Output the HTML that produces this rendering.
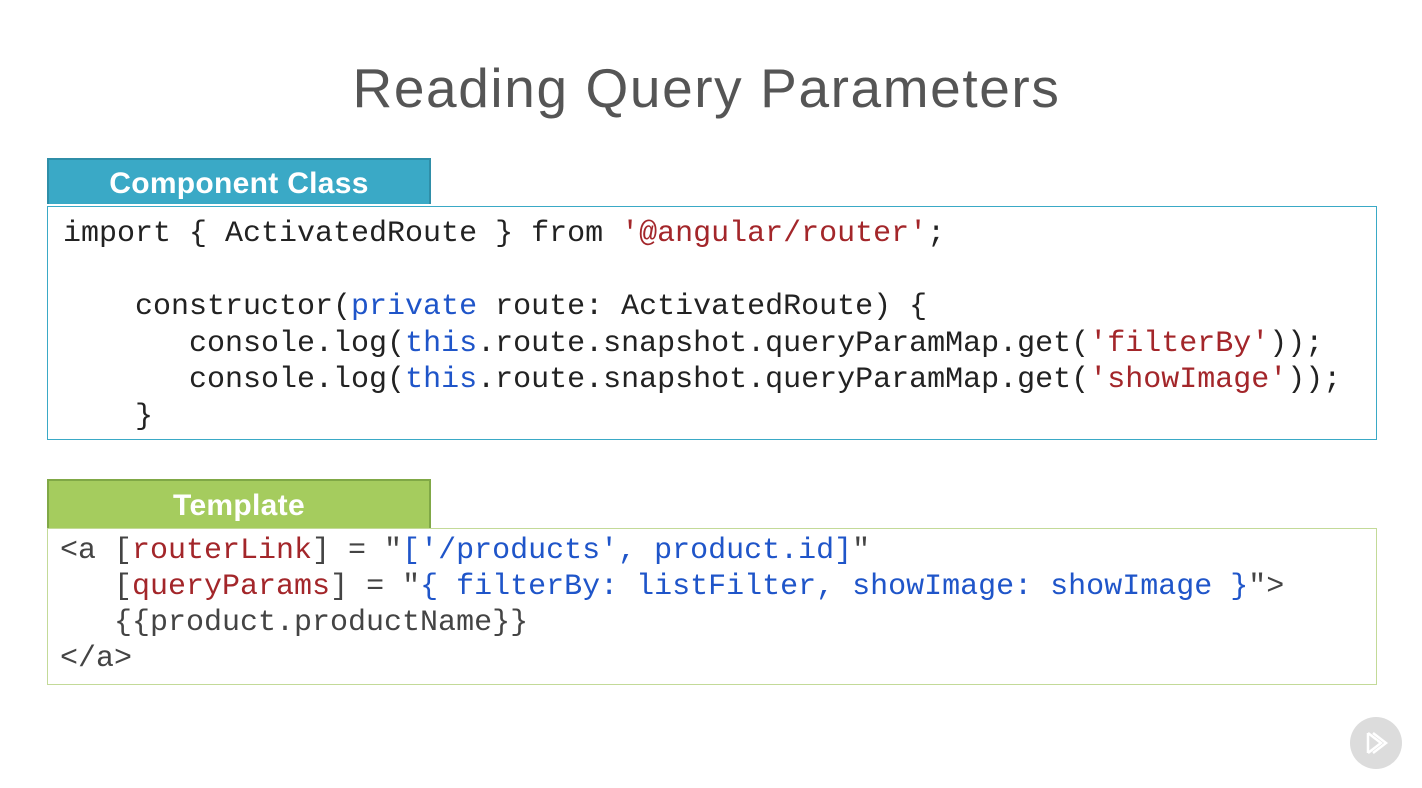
<!DOCTYPE html>
<html><head><style>
html,body{margin:0;padding:0;background:#fff;width:1422px;height:788px;overflow:hidden;position:relative;font-family:"Liberation Sans",sans-serif}
.title{position:absolute;top:56px;left:0;width:1413px;text-align:center;font-size:55px;color:#555;letter-spacing:1.6px}
.hdr{position:absolute;left:47px;width:384px;height:46px;color:#fff;font-weight:bold;font-size:30px;text-align:center;line-height:48px;box-sizing:border-box;letter-spacing:0.3px}
.box{position:absolute;left:47px;width:1330px;box-sizing:border-box;background:#fff}
pre{margin:0;font-family:"Liberation Mono",monospace;font-size:30px;position:absolute;white-space:pre}
.r{color:#a3262a}.b{color:#1f55c9}
</style></head><body>
<div class="title">Reading Query Parameters</div>
<div class="hdr" style="top:158px;background:#3aa9c6;border:2px solid #2f8ea8;border-bottom:none">Component Class</div>
<div class="box" style="top:206px;height:234px;border:1px solid #3aa9c6"></div>
<pre style="left:63px;top:216px;line-height:36.5px;color:#222">import { ActivatedRoute } from <span class="r">'@angular/router'</span>;

    constructor(<span class="b">private</span> route: ActivatedRoute) {
       console.log(<span class="b">this</span>.route.snapshot.queryParamMap.get(<span class="r">'filterBy'</span>));
       console.log(<span class="b">this</span>.route.snapshot.queryParamMap.get(<span class="r">'showImage'</span>));
    }</pre>
<div class="hdr" style="top:479px;height:49px;background:#a5cc5e;border:2px solid #80a846;border-bottom:none;line-height:50px">Template</div>
<div class="box" style="top:528px;height:157px;border:1px solid #c3da98"></div>
<pre style="left:60px;top:533px;line-height:36px;color:#444">&lt;a [<span class="r">routerLink</span>] = "<span class="b">['/products', product.id]</span>"
   [<span class="r">queryParams</span>] = "<span class="b">{ filterBy: listFilter, showImage: showImage }</span>"&gt;
   {{product.productName}}
&lt;/a&gt;</pre>
<svg style="position:absolute;left:1349px;top:716px" width="54" height="54" viewBox="0 0 54 54">
<circle cx="27" cy="27" r="26" fill="#dcdcdc"/>
<path d="M19 17 L19 37 M19 17 L32 27 L19 37 M24 17 L37 27 L24 37" fill="none" stroke="#fff" stroke-width="2.5"/>
</svg>
</body></html>
